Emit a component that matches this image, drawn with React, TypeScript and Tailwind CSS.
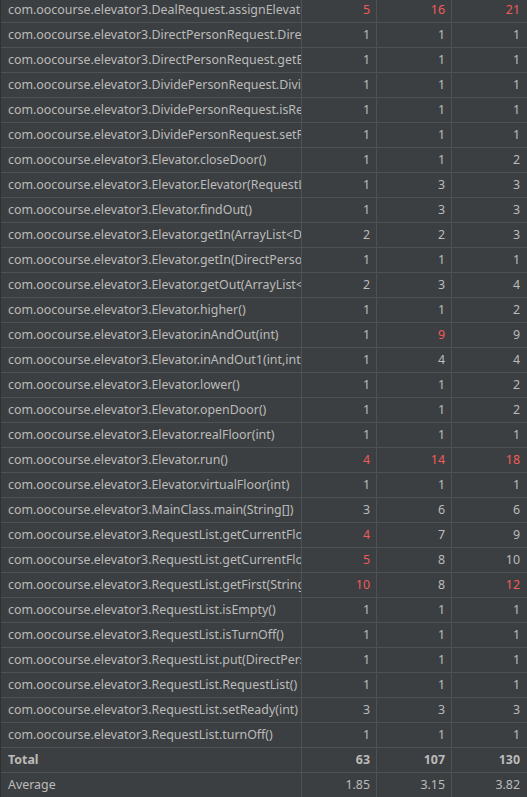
type Row = { name: string; v: (string | number)[]; hot?: number[] };

const rows: Row[] = [
  { name: 'com.oocourse.elevator3.DealRequest.assignElevator(PersonRequest)', v: [5, 16, 21], hot: [0, 1, 2] },
  { name: 'com.oocourse.elevator3.DirectPersonRequest.DirectPersonRequest()', v: [1, 1, 1] },
  { name: 'com.oocourse.elevator3.DirectPersonRequest.getElevatorId()', v: [1, 1, 1] },
  { name: 'com.oocourse.elevator3.DividePersonRequest.DividePersonRequest()', v: [1, 1, 1] },
  { name: 'com.oocourse.elevator3.DividePersonRequest.isReady()', v: [1, 1, 1] },
  { name: 'com.oocourse.elevator3.DividePersonRequest.setReady()', v: [1, 1, 1] },
  { name: 'com.oocourse.elevator3.Elevator.closeDoor()', v: [1, 1, 2] },
  { name: 'com.oocourse.elevator3.Elevator.Elevator(RequestList)', v: [1, 3, 3] },
  { name: 'com.oocourse.elevator3.Elevator.findOut()', v: [1, 3, 3] },
  { name: 'com.oocourse.elevator3.Elevator.getIn(ArrayList<DirectPersonRequest>)', v: [2, 2, 3] },
  { name: 'com.oocourse.elevator3.Elevator.getIn(DirectPersonRequest)', v: [1, 1, 1] },
  { name: 'com.oocourse.elevator3.Elevator.getOut(ArrayList<DirectPersonRequest>)', v: [2, 3, 4] },
  { name: 'com.oocourse.elevator3.Elevator.higher()', v: [1, 1, 2] },
  { name: 'com.oocourse.elevator3.Elevator.inAndOut(int)', v: [1, 9, 9], hot: [1] },
  { name: 'com.oocourse.elevator3.Elevator.inAndOut1(int,int)', v: [1, 4, 4] },
  { name: 'com.oocourse.elevator3.Elevator.lower()', v: [1, 1, 2] },
  { name: 'com.oocourse.elevator3.Elevator.openDoor()', v: [1, 1, 2] },
  { name: 'com.oocourse.elevator3.Elevator.realFloor(int)', v: [1, 1, 1] },
  { name: 'com.oocourse.elevator3.Elevator.run()', v: [4, 14, 18], hot: [0, 1, 2] },
  { name: 'com.oocourse.elevator3.Elevator.virtualFloor(int)', v: [1, 1, 1] },
  { name: 'com.oocourse.elevator3.MainClass.main(String[])', v: [3, 6, 6] },
  { name: 'com.oocourse.elevator3.RequestList.getCurrentFloorUp(int)', v: [4, 7, 9], hot: [0] },
  { name: 'com.oocourse.elevator3.RequestList.getCurrentFloorDown(int)', v: [5, 8, 10], hot: [0] },
  { name: 'com.oocourse.elevator3.RequestList.getFirst(String)', v: [10, 8, 12], hot: [0, 2] },
  { name: 'com.oocourse.elevator3.RequestList.isEmpty()', v: [1, 1, 1] },
  { name: 'com.oocourse.elevator3.RequestList.isTurnOff()', v: [1, 1, 1] },
  { name: 'com.oocourse.elevator3.RequestList.put(DirectPersonRequest)', v: [1, 1, 1] },
  { name: 'com.oocourse.elevator3.RequestList.RequestList()', v: [1, 1, 1] },
  { name: 'com.oocourse.elevator3.RequestList.setReady(int)', v: [3, 3, 3] },
  { name: 'com.oocourse.elevator3.RequestList.turnOff()', v: [1, 1, 1] },
];

function TableRow({ name, v, hot = [], bold = false }: Row & { bold?: boolean }) {
  return (
    <div className={`flex h-[25px] border-b border-[#4f5254] ${bold ? 'font-bold' : ''}`}>
      {/* method name, clipped by the column like in the IDE */}
      <div className="w-[301px] shrink-0 border-r border-[#4f5254] pl-[7px] flex items-center overflow-hidden whitespace-nowrap">
        {name}
      </div>
      {v.map((n, i) => (
        <div
          key={i}
          className={`shrink-0 flex items-center justify-end ${
            i === 2 ? 'w-[77px] pr-[9px]' : 'w-[75px] pr-[6px] border-r border-[#4f5254]'
          } ${hot.includes(i) ? 'text-[#f05a5a]' : ''}`}
        >
          {n}
        </div>
      ))}
    </div>
  );
}

export default function App() {
  return (
    <div className="w-[527px] h-[797px] overflow-hidden bg-[#3c3f41] text-[#bbbbbb] text-[12.4px] font-['Noto_Sans',sans-serif]">
      <div className="-mt-[2px] border-l border-[#2f3133]">
        {rows.map((r, i) => (
          <TableRow key={i} {...r} />
        ))}
        <TableRow name="Total" v={[63, 107, 130]} bold />
        <TableRow name="Average" v={['1.85', '3.15', '3.82']} />
      </div>
    </div>
  );
}
